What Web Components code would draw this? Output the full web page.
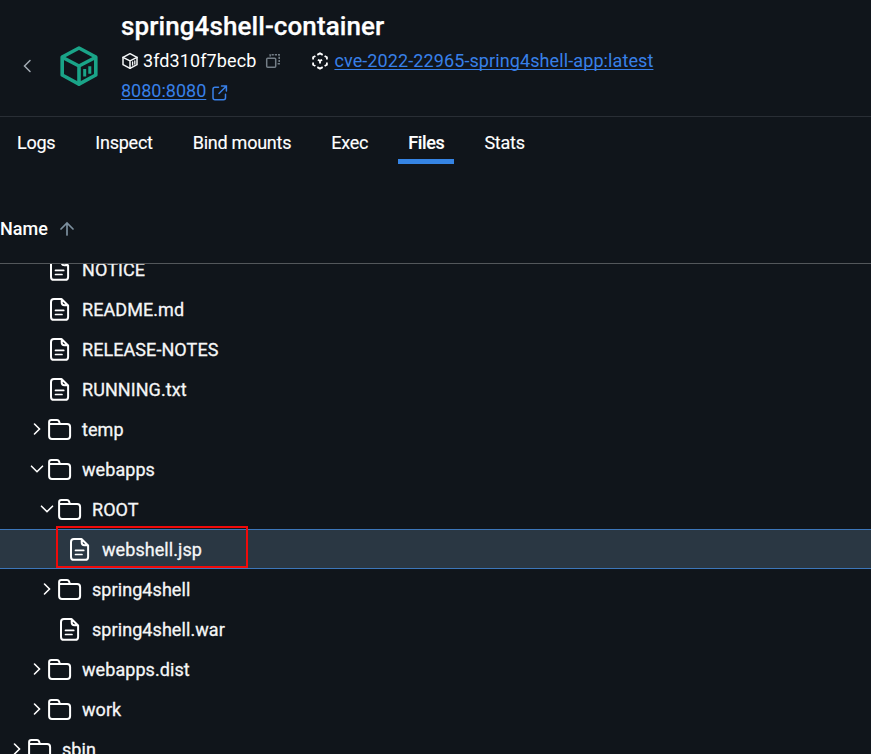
<!DOCTYPE html>
<html lang="en">
<head>
<meta charset="utf-8">
<title>spring4shell-container</title>
<style>
html,body{margin:0;height:100%;background:#10151b;overflow:hidden}
body{font-family:Roboto,"Liberation Sans",sans-serif;color:#fff}
</style>
</head>
<body>
<container-page></container-page>
<script>
const ICONS = {
  back: [24, 24, '<path d="M15 6.5 9.5 12l5.500 5.500" stroke="#a3abb3" stroke-width="1.500"/>'],
  cube: [40, 42, '<g stroke="#1aa488" stroke-width="3.600" stroke-linejoin="round"><path d="M20 3 36.800 12v18L20 39.200 3.200 30V12Z"/><path d="M3.700 12.500 20 21l16.300-8.500M20 21v18"/></g><path d="M25.700 24v7.500M30.800 21.200v7.500" stroke="#1aa488" stroke-width="3" stroke-linecap="butt"/>'],
  cubeSmall: [16, 18, '<g stroke="#f4f6f8" stroke-width="1.500" stroke-linejoin="round"><path d="M8 1.700 15 5.300v7.400L8 16.300 1 12.700V5.300Z"/><path d="m1 5.400 7 3.500 7-3.500M8 9v7.200"/></g><path d="M10.600 10v3M12.800 9v3" stroke="#f4f6f8" stroke-width="1.300"/>'],
  copy: [16, 16, '<rect x="1.700" y="5.200" width="9" height="9" rx="1" stroke="#747e87" stroke-width="1.500"/><path d="M5.200 3.500V1.700h9v9h-2" stroke="#747e87" stroke-width="1.500" stroke-dasharray="2.200 1" stroke-linecap="butt"/>'],
  image: [18, 18, '<path d="m6.300 2.900 2.700-1.500 2.700 1.500M13.600 4l2.300 1.300v2.300M15.900 10.400v2.300l-2.300 1.300M11.700 15.100 9 16.600l-2.700-1.500M4.400 14l-2.300-1.300v-2.300M2.100 7.600V5.300L4.400 4" stroke="#fff" stroke-width="1.800" stroke-linecap="butt"/><path d="m6.900 7.700 2.100 1.200 2.100-1.200M9 8.900v2.600" stroke="#fff" stroke-width="1.800" stroke-linecap="butt"/>'],
  external: [18, 18, '<path d="M7.500 3.200H4Q2 3.200 2 5.200V13.700q0 2 2 2h8.500q2 0 2-2v-3.500M10.500 2h4.900v4.900M15.200 2.200 8 9.500" stroke="#3880e8" stroke-width="1.500"/>'],
  up: [16, 16, '<path d="M7 14V2.500M1 8 7 2l6 6" stroke="#7c8f9e" stroke-width="1.700"/>'],
  file: [24, 24, '<path d="M13.500 2H5.900q-2.900 0-2.900 2.900v15q0 2.900 2.900 2.900h11.300q2.900 0 2.900-2.900V8.500ZM13.700 2.200V5.600q0 2.700 2.700 2.700h3.500" stroke="#fff" stroke-width="2" stroke-linejoin="round"/><path d="M7.500 13.400h8.200M7.500 17.500h6.500" stroke="#fff" stroke-width="1.700"/>'],
  folder: [24, 24, '<path d="M1.100 7.500V5.200q0-2.300 2.300-2.300h5.700q1.300 0 1.800 1.300L12 7h7.200q2.900 0 2.900 2.900v9.200q0 2.900-2.900 2.900H4q-2.900 0-2.900-2.900ZM1.200 7H12" stroke="#fff" stroke-width="2" stroke-linejoin="round"/>'],
  right: [14, 14, '<path d="m4.500 2 5 5-5 5" stroke="#fff" stroke-width="1.600"/>'],
  down: [14, 14, '<path d="m1.500 4.200 5.500 5.500 5.500-5.500" stroke="#fff" stroke-width="1.600"/>']
};
const define = (tag, html) => customElements.define(tag, class extends HTMLElement {
  constructor() {
    super();
    this.attachShadow({mode: 'open'});
  }
  connectedCallback() {
    this.shadowRoot.innerHTML = typeof html === 'function' ? html(this) : html;
  }
});

define('ui-icon', el => {
  const [w, h, body] = ICONS[el.getAttribute('name')];
  return `<style>:host{display:block;flex:none;width:${w}px;height:${h}px}svg{display:block}</style>
  <svg width="${w}" height="${h}" viewBox="0 0 ${w} ${h}" fill="none" stroke-linecap="round">${body}</svg>`;
});

define('text-link', `<style>
:host{display:block}
a{color:#3880e8;text-decoration:underline;text-decoration-thickness:1px;text-underline-offset:2px;text-decoration-skip-ink:none}
</style><a href="#"><slot></slot></a>`);

define('container-header', `<style>
:host{display:flex;box-sizing:border-box;height:117px;border-bottom:1px solid #292e35;padding-left:15px;font-size:18px;line-height:30px}
.back{margin-top:54px}
.logo{margin:45px 22px 0 20px}
h1{margin:9px 0 3px;font-size:26px;line-height:34px;font-weight:500;letter-spacing:.09px;-webkit-text-stroke:.25px}
.line{display:flex;align-items:center;height:30px}
.spaced{letter-spacing:.1px}
</style>
<ui-icon class="back" name="back"></ui-icon>
<ui-icon class="logo" name="cube"></ui-icon>
<div><h1>spring4shell-container</h1>
<div class="line spaced"><ui-icon name="cubeSmall" style="margin:0 5px 0 1px"></ui-icon><span>3fd310f7becb</span><ui-icon name="copy" style="margin:0 30px 0 9px"></ui-icon><ui-icon name="image" style="margin-right:5px"></ui-icon><text-link>cve-2022-22965-spring4shell-app:latest</text-link></div>
<div class="line"><text-link>8080:8080</text-link><ui-icon name="external" style="margin:3px 0 0 5px"></ui-icon></div>
</div>`);

define('tab-item', `<style>
:host{display:block;box-sizing:border-box;height:47px;padding:11px 10px 0;font-size:18px;line-height:30px;letter-spacing:-.25px;-webkit-text-stroke:.15px}
:host([selected]){font-weight:500;letter-spacing:-.35px;border-bottom:5px solid #3584e4}
</style><slot></slot>`);

define('tab-bar', `<style>:host{display:flex;gap:20px;padding-left:7px;height:83px}</style><slot></slot>`);

define('column-header', `<style>
:host{display:flex;box-sizing:border-box;height:64px;border-bottom:1px solid #53575b;padding-top:14px;gap:12px;font-size:18px;line-height:30px;font-weight:500}
ui-icon{margin-top:7px}
</style><slot></slot><ui-icon name="up"></ui-icon>`);

define('tree-row', el => {
  const folder = el.hasAttribute('state');
  return `<style>
:host{display:flex;align-items:center;box-sizing:border-box;height:40px;padding-left:${el.getAttribute('indent')}px;font-size:18px;line-height:30px;letter-spacing:.07px;color:#f5f6f7;-webkit-text-stroke:.3px}
:host([selected]){background:#2a3743;box-shadow:inset 0 1px #3c76b9,inset 0 -1px #3c76b9}
.toggle{width:14px;height:14px;margin:0 4px}
.icon{margin-right:10px}
span{padding-top:1px}
</style><div class="toggle">${folder ? `<ui-icon name="${el.getAttribute('state')}"></ui-icon>` : ''}</div>
<ui-icon class="icon" name="${folder ? 'folder' : 'file'}"></ui-icon><span><slot></slot></span>`;
});

define('highlight-box', `<style>:host{position:absolute;left:56px;top:262px;width:192px;height:42px;box-sizing:border-box;border:2px solid #f00a0a}</style>`);

define('file-tree', `<style>:host{display:block;position:relative;overflow:hidden;flex:1;min-height:0}
.rows{margin-top:-15px}</style><div class="rows"><slot></slot></div><highlight-box></highlight-box>`);

define('container-page', `<style>:host{display:flex;flex-direction:column;height:100vh;overflow:hidden}container-header,tab-bar,column-header{flex:none}</style>
<container-header></container-header>
<tab-bar><tab-item>Logs</tab-item><tab-item>Inspect</tab-item><tab-item>Bind mounts</tab-item><tab-item>Exec</tab-item><tab-item selected>Files</tab-item><tab-item>Stats</tab-item></tab-bar>
<column-header>Name</column-header>
<file-tree>
<tree-row indent="26">NOTICE</tree-row>
<tree-row indent="26">README.md</tree-row>
<tree-row indent="26">RELEASE-NOTES</tree-row>
<tree-row indent="26">RUNNING.txt</tree-row>
<tree-row indent="26" state="right">temp</tree-row>
<tree-row indent="26" state="down">webapps</tree-row>
<tree-row indent="36" state="down">ROOT</tree-row>
<tree-row indent="46" selected>webshell.jsp</tree-row>
<tree-row indent="36" state="right">spring4shell</tree-row>
<tree-row indent="36">spring4shell.war</tree-row>
<tree-row indent="26" state="right">webapps.dist</tree-row>
<tree-row indent="26" state="right">work</tree-row>
<tree-row indent="6" state="right">sbin</tree-row>
</file-tree>`);
</script>
</body>
</html>
